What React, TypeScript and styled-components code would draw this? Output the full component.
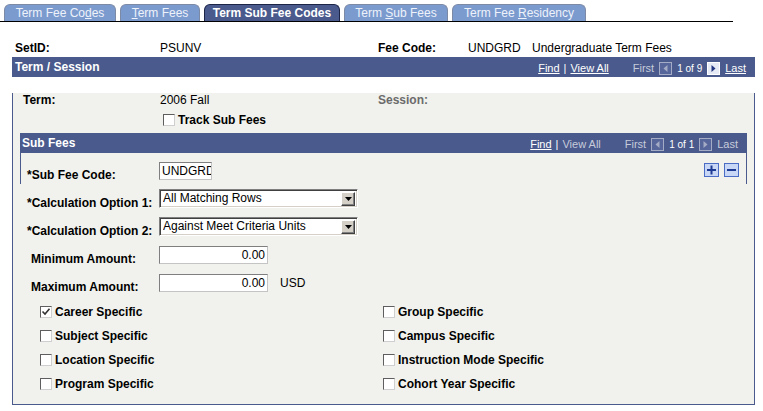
import React from 'react';
import styled, { createGlobalStyle } from 'styled-components';

const NAVY = '#4a5a8c';
const PANEL = '#f1f2ed';
const DIM = '#c6cbdb';

const Global = createGlobalStyle`
  html, body { margin: 0; padding: 0; background: #fff; }
  body { font-family: "Liberation Sans", Arial, sans-serif; font-size: 12px; color: #000; }
  #root { width: 763px; height: 411px; }
`;

const Page = styled.div`
  width: 763px;
  height: 411px;
  overflow: hidden;
`;

const TabBar = styled.div`
  box-sizing: border-box;
  display: flex;
  align-items: flex-end;
  width: 733px;
  height: 22px;
  padding: 4px 0 0 4px;
  border-bottom: 1px solid #000;
`;

const Tab = styled.div<{ $w: number; $active?: boolean }>`
  box-sizing: border-box;
  width: ${p => p.$w}px;
  height: 17px;
  margin-right: 4px;
  border: 1px solid ${p => (p.$active ? '#1c2448' : '#7d8aa6')};
  border-bottom: none;
  border-radius: 6px 6px 0 0;
  background: ${p => (p.$active ? NAVY : '#7b9bcf')};
  color: ${p => (p.$active ? '#fff' : '#eef2fa')};
  font-weight: ${p => (p.$active ? 700 : 400)};
  font-size: 12px;
  line-height: 16px;
  text-align: center;
  white-space: nowrap;
  u { text-decoration: underline; }
`;

const KeyRow = styled.div`
  display: grid;
  grid-template-columns: 145px 218px 90px 64px auto;
  align-items: center;
  height: 14px;
  line-height: 14px;
  margin-top: 19px;
  padding-left: 15px;
  white-space: nowrap;
`;

const Label = styled.span<{ $dim?: boolean; $indent?: number }>`
  font-weight: 700;
  color: ${p => (p.$dim ? '#6b6b6b' : '#000')};
  padding-left: ${p => p.$indent || 0}px;
  white-space: nowrap;
`;

const Value = styled.span`
  white-space: nowrap;
`;

const Outer = styled.div`
  margin: 2px 0 0 12px;
  width: 743px;
`;

const BarHeader = styled.div<{ $pl: number }>`
  box-sizing: border-box;
  display: flex;
  align-items: center;
  height: 20px;
  padding: 0 9px 0 ${p => p.$pl}px;
  background: ${NAVY};
  color: #fff;
`;

const BarTitle = styled.span`
  font-weight: 700;
  font-size: 12px;
  white-space: nowrap;
`;

const Nav = styled.div`
  margin-left: auto;
  display: flex;
  align-items: center;
  font-size: 11px;
  white-space: nowrap;
  padding-top: 2px;
`;

const NavText = styled.span<{ $link?: boolean; $dim?: boolean; $small?: boolean; $gap?: number }>`
  color: ${p => (p.$dim ? DIM : '#fff')};
  text-decoration: ${p => (p.$link ? 'underline' : 'none')};
  font-size: ${p => (p.$small ? 10 : 11)}px;
  margin-left: ${p => p.$gap || 0}px;
`;

const Sep = styled.span`
  color: #fff;
  margin: 0 4px;
`;

const IconWrap = styled.span`
  display: inline-flex;
  margin: 0 5px;
  height: 13px;
`;

const Body = styled.div`
  box-sizing: border-box;
  border: 1px solid ${NAVY};
  border-top: none;
  background: ${PANEL};
  padding-bottom: 8px;
`;

const TermRow = styled.div`
  display: grid;
  grid-template-columns: 137px 218px auto;
  align-items: center;
  height: 14px;
  line-height: 14px;
  margin-top: 16px;
  padding-left: 10px;
`;

const CheckLine = styled.div<{ $pl?: number; $mt?: number }>`
  display: flex;
  align-items: center;
  gap: 3px;
  height: 14px;
  line-height: 14px;
  padding-left: ${p => p.$pl || 0}px;
  margin-top: ${p => p.$mt || 0}px;
`;

const Sub = styled.div`
  margin: 6px 7px 0;
`;

const SubTop = styled.div`
  box-sizing: border-box;
  display: flex;
  align-items: flex-start;
  height: 31px;
  padding: 9px 7px 0 6px;
  border-left: 1px solid ${NAVY};
  border-right: 1px solid ${NAVY};
`;

const FormRow = styled.div<{ $mt?: number; $pl?: number }>`
  display: grid;
  grid-template-columns: 132px auto;
  align-items: center;
  margin-top: ${p => p.$mt || 0}px;
  padding-left: ${p => p.$pl || 0}px;
  flex: 1;
  ${Label} {
    align-self: end;
    margin-bottom: -2px;
    line-height: 14px;
  }
`;

const FieldLine = styled.div`
  display: flex;
  align-items: center;
`;

const TextBox = styled.div<{ $w: number; $right?: boolean }>`
  box-sizing: border-box;
  width: ${p => p.$w}px;
  height: 18px;
  background: #fff;
  border: 1px solid;
  border-color: #7f7f7f #c4c4c4 #c4c4c4 #7f7f7f;
  padding: 0 2px 0 2px;
  line-height: 16px;
  text-align: ${p => (p.$right ? 'right' : 'left')};
  overflow: hidden;
  white-space: nowrap;
`;

const SelectBox = styled.div`
  box-sizing: border-box;
  display: flex;
  align-items: center;
  width: 199px;
  height: 19px;
  background: #fff;
  border: 1px solid;
  border-color: #7f7f7f #ffffff #ffffff #7f7f7f;
  box-shadow: inset 1px 1px 0 #404040, inset -1px -1px 0 #d4d0c8;
  padding: 0 2px 0 3px;
`;

const SelectText = styled.span`
  flex: 1;
  white-space: nowrap;
  overflow: hidden;
  line-height: 15px;
`;

const DropBtn = styled.span`
  box-sizing: border-box;
  display: inline-flex;
  align-items: center;
  justify-content: center;
  width: 14px;
  height: 14px;
  background: #d4d0c8;
  border: 1px solid;
  border-color: #ffffff #404040 #404040 #ffffff;
  box-shadow: inset -1px -1px 0 #808080;
`;

const Unit = styled.span`
  margin-left: 12px;
`;

const EditBtns = styled.div`
  display: flex;
  gap: 5px;
  margin-top: 1px;
`;

const CheckGrid = styled.div`
  display: grid;
  grid-template-columns: 343px auto;
  grid-auto-rows: 24px;
  align-items: center;
  margin-top: 8px;
  padding-left: 20px;
`;

const Box = styled.span`
  box-sizing: border-box;
  display: inline-flex;
  align-items: center;
  justify-content: center;
  flex: none;
  width: 12px;
  height: 12px;
  background: #fff;
  border: 1px solid;
  border-color: #5e5e5e #cfcfcf #cfcfcf #5e5e5e;
`;

const CheckItem = styled.div`
  display: flex;
  align-items: center;
  gap: 3px;
`;

function Check({ checked }: { checked?: boolean }) {
  return (
    <Box>
      {checked && (
        <svg width="10" height="10" viewBox="0 0 10 10">
          <polyline points="1.5,4.5 4,7 8.5,1.8" fill="none" stroke="#333" strokeWidth="1.6" />
        </svg>
      )}
    </Box>
  );
}

function Arrow({ dir, enabled }: { dir: 'left' | 'right'; enabled?: boolean }) {
  const tri = dir === 'left' ? '8.5,3 8.5,10 4.5,6.5' : '4.5,3 4.5,10 8.5,6.5';
  return (
    <IconWrap>
      <svg width="13" height="13" viewBox="0 0 13 13">
        <rect
          x="0.5"
          y="0.5"
          width="12"
          height="12"
          fill={enabled ? '#e6eaf5' : '#56659a'}
          stroke={enabled ? '#ffffff' : '#a4abc4'}
        />
        <polygon points={tri} fill={enabled ? '#233680' : '#a4abc4'} />
      </svg>
    </IconWrap>
  );
}

function EditButton({ kind }: { kind: 'plus' | 'minus' }) {
  return (
    <svg width="15" height="14" viewBox="0 0 15 14">
      <rect x="0.5" y="0.5" width="14" height="13" fill="#c9d7f6" stroke="#4b6cc4" />
      <rect x="3" y="6" width="9" height="2" fill="#1d3a94" />
      {kind === 'plus' && <rect x="6.5" y="2.5" width="2" height="9" fill="#1d3a94" />}
    </svg>
  );
}

function DropArrow() {
  return (
    <DropBtn>
      <svg width="7" height="4" viewBox="0 0 7 4">
        <polygon points="0,0 7,0 3.5,4" fill="#000" />
      </svg>
    </DropBtn>
  );
}

function Select({ value }: { value: string }) {
  return (
    <SelectBox>
      <SelectText>{value}</SelectText>
      <DropArrow />
    </SelectBox>
  );
}

const tabs: { w: number; label: React.ReactNode; active?: boolean }[] = [
  { w: 112, label: <>Term Fee Co<u>d</u>es</> },
  { w: 80, label: <><u>T</u>erm Fees</> },
  { w: 136, label: <>Term Sub Fee Codes</>, active: true },
  { w: 104, label: <>Term <u>S</u>ub Fees</> },
  { w: 134, label: <>Term Fee <u>R</u>esidency</> },
];

const checks: [string, boolean][] = [
  ['Career Specific', true],
  ['Group Specific', false],
  ['Subject Specific', false],
  ['Campus Specific', false],
  ['Location Specific', false],
  ['Instruction Mode Specific', false],
  ['Program Specific', false],
  ['Cohort Year Specific', false],
];

export default function App() {
  return (
    <Page>
      <Global />
      <TabBar>
        {tabs.map((t, i) => (
          <Tab key={i} $w={t.w} $active={t.active}>
            {t.label}
          </Tab>
        ))}
      </TabBar>

      <KeyRow>
        <Label>SetID:</Label>
        <Value>PSUNV</Value>
        <Label>Fee Code:</Label>
        <Value>UNDGRD</Value>
        <Value>Undergraduate Term Fees</Value>
      </KeyRow>

      <Outer>
        <BarHeader $pl={3}>
          <BarTitle>Term / Session</BarTitle>
          <Nav>
            <NavText $link>Find</NavText>
            <Sep>|</Sep>
            <NavText $link>View All</NavText>
            <NavText $dim $gap={24}>First</NavText>
            <Arrow dir="left" />
            <NavText $small>1 of 9</NavText>
            <Arrow dir="right" enabled />
            <NavText $link>Last</NavText>
          </Nav>
        </BarHeader>
        <Body>
          <TermRow>
            <Label>Term:</Label>
            <Value>2006 Fall</Value>
            <Label $dim>Session:</Label>
          </TermRow>
          <CheckLine $pl={150} $mt={6}>
            <Check />
            <Label>Track Sub Fees</Label>
          </CheckLine>

          <Sub>
            <BarHeader $pl={2}>
              <BarTitle>Sub Fees</BarTitle>
              <Nav>
                <NavText $link>Find</NavText>
                <Sep>|</Sep>
                <NavText $dim>View All</NavText>
                <NavText $dim $gap={24}>First</NavText>
                <Arrow dir="left" />
                <NavText $small>1 of 1</NavText>
                <Arrow dir="right" />
                <NavText $dim>Last</NavText>
              </Nav>
            </BarHeader>
            <SubTop>
              <FormRow>
                <Label>*Sub Fee Code:</Label>
                <TextBox $w={53}>UNDGRD</TextBox>
              </FormRow>
              <EditBtns>
                <EditButton kind="plus" />
                <EditButton kind="minus" />
              </EditBtns>
            </SubTop>

            <FormRow $mt={5} $pl={7}>
              <Label>*Calculation Option 1:</Label>
              <Select value="All Matching Rows" />
            </FormRow>
            <FormRow $mt={9} $pl={7}>
              <Label>*Calculation Option 2:</Label>
              <Select value="Against Meet Criteria Units" />
            </FormRow>
            <FormRow $mt={10} $pl={7}>
              <Label $indent={4}>Minimum Amount:</Label>
              <FieldLine>
                <TextBox $w={109} $right>0.00</TextBox>
              </FieldLine>
            </FormRow>
            <FormRow $mt={10} $pl={7}>
              <Label $indent={4}>Maximum Amount:</Label>
              <FieldLine>
                <TextBox $w={109} $right>0.00</TextBox>
                <Unit>USD</Unit>
              </FieldLine>
            </FormRow>

            <CheckGrid>
              {checks.map(([label, on]) => (
                <CheckItem key={label}>
                  <Check checked={on} />
                  <Label>{label}</Label>
                </CheckItem>
              ))}
            </CheckGrid>
          </Sub>
        </Body>
      </Outer>
    </Page>
  );
}
